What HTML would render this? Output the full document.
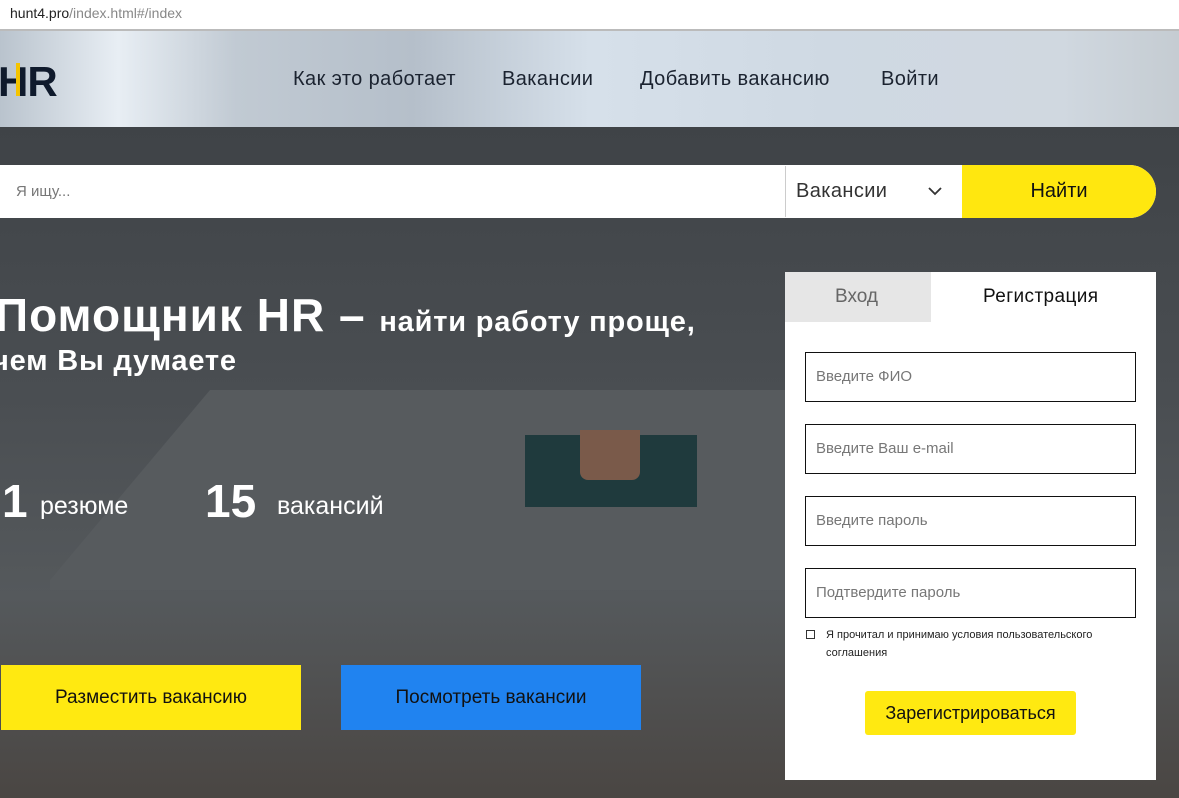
<!DOCTYPE html>
<html><head><meta charset="utf-8"><style>
*{margin:0;padding:0;box-sizing:border-box}
body{width:1179px;height:798px;overflow:hidden;position:relative;font-family:"Liberation Sans","DejaVu Sans",sans-serif;background:#4a4e52}
.abs{position:absolute}
#url{left:0;top:0;width:1179px;height:31px;background:#fff;border-bottom:2px solid #bbb;font-size:14px;color:#888;padding:5px 0 0 10px}
#url b{font-weight:normal;color:#222}
#hdr{left:0;top:31px;width:1179px;height:96px;background:linear-gradient(90deg,#b9c3cd 0%,#e8eef4 10%,#c1cad3 20%,#b5bfca 35%,#d6e0ea 50%,#cfd9e3 70%,#d0d8e0 90%,#c5ccd2 100%)}
.nav{top:68px;font-size:20px;color:#1b2330;letter-spacing:.4px}
#hero{left:0;top:127px;width:1179px;height:671px;background:linear-gradient(180deg,#3f4347 0%,#4a4e52 40%,#55595c 70%,#4a4643 100%)}
#table{left:50px;top:390px;width:740px;height:200px;background:#575b5e;clip-path:polygon(160px 0,740px 0,740px 200px,0 200px,0 190px)}
#search{left:0;top:165px;width:1156px;height:53px;background:#fff;border-radius:0 27px 27px 0}
</style></head><body>
<div id="url" class="abs"><b>hunt4.pro</b>/index.html#/index</div>
<div id="hdr" class="abs"></div>
<div class="abs" style="left:-2px;top:58px;font-size:42px;font-weight:bold;color:#0f1a2c;letter-spacing:-1px">HR</div>
<div class="abs" style="left:16px;top:63px;width:4px;height:33px;background:#f5c400"></div>
<div class="abs nav" style="left:293px">Как это работает</div>
<div class="abs nav" style="left:502px">Вакансии</div>
<div class="abs nav" style="left:640px">Добавить вакансию</div>
<div class="abs nav" style="left:881px">Войти</div>
<div id="hero" class="abs"></div>
<div id="table" class="abs"></div>
<div class="abs" style="left:525px;top:435px;width:172px;height:72px;background:#1f3a3d"></div>
<div class="abs" style="left:580px;top:430px;width:60px;height:50px;background:#7a5a4a;border-radius:0 0 8px 8px"></div>
<div id="search" class="abs"></div>
<div class="abs" style="left:16px;top:183px;font-size:15px;color:#777">Я ищу...</div>
<div class="abs" style="left:785px;top:166px;width:1px;height:51px;background:#ccc"></div>
<div class="abs" style="left:796px;top:180px;font-size:20px;color:#333;letter-spacing:.4px">Вакансии</div>
<svg class="abs" style="left:927px;top:186px" width="16" height="10"><path d="M2 2 L8 8 L14 2" stroke="#333" stroke-width="1.8" fill="none"/></svg>
<div class="abs" style="left:962px;top:165px;width:194px;height:53px;background:#ffe70f;border-radius:0 27px 27px 0;font-size:20px;color:#111;text-align:center;line-height:53px">Найти</div>
<div class="abs" style="left:-5px;top:288px;font-size:46px;font-weight:bold;color:#fff;white-space:nowrap;letter-spacing:1px">Помощник HR – <span style="font-size:29px;letter-spacing:.8px">найти работу проще,</span></div>
<div class="abs" style="left:-8px;top:345px;font-size:29px;font-weight:bold;color:#fff;letter-spacing:.8px">чем Вы думаете</div>
<div class="abs" style="left:2px;top:474px;font-size:46px;font-weight:bold;color:#fff">1</div>
<div class="abs" style="left:40px;top:492px;font-size:25px;color:#fff">резюме</div>
<div class="abs" style="left:205px;top:474px;font-size:46px;font-weight:bold;color:#fff">15</div>
<div class="abs" style="left:277px;top:492px;font-size:25px;color:#fff">вакансий</div>
<div class="abs" style="left:1px;top:665px;width:300px;height:65px;background:#ffe911;font-size:19px;text-align:center;line-height:65px;color:#111">Разместить вакансию</div>
<div class="abs" style="left:341px;top:665px;width:300px;height:65px;background:#2083f0;font-size:19px;text-align:center;line-height:65px;color:#111">Посмотреть вакансии</div>
<div class="abs" style="left:785px;top:272px;width:371px;height:508px;background:#fff"></div>
<div class="abs" style="left:785px;top:272px;width:146px;height:50px;background:#e6e6e6;font-size:19px;color:#666;padding:14px 0 0 50px">Вход</div>
<div class="abs" style="left:983px;top:286px;font-size:19px;color:#111;letter-spacing:.4px">Регистрация</div>
<div class="abs" style="left:805px;top:352px;width:331px;height:50px;border:1px solid #111;font-size:15px;color:#777;padding:15px 0 0 10px">Введите ФИО</div>
<div class="abs" style="left:805px;top:424px;width:331px;height:50px;border:1px solid #111;font-size:15px;color:#777;padding:15px 0 0 10px">Введите Ваш e-mail</div>
<div class="abs" style="left:805px;top:496px;width:331px;height:50px;border:1px solid #111;font-size:15px;color:#777;padding:15px 0 0 10px">Введите пароль</div>
<div class="abs" style="left:805px;top:568px;width:331px;height:50px;border:1px solid #111;font-size:15px;color:#777;padding:15px 0 0 10px">Подтвердите пароль</div>
<div class="abs" style="left:806px;top:630px;width:9px;height:9px;border:1px solid #333"></div>
<div class="abs" style="left:826px;top:626px;width:320px;font-size:11px;color:#222;line-height:18px">Я прочитал и принимаю условия пользовательского соглашения</div>
<div class="abs" style="left:865px;top:691px;width:211px;height:44px;background:#ffe911;border-radius:3px;font-size:18px;text-align:center;line-height:44px;color:#111">Зарегистрироваться</div>
</body></html>
